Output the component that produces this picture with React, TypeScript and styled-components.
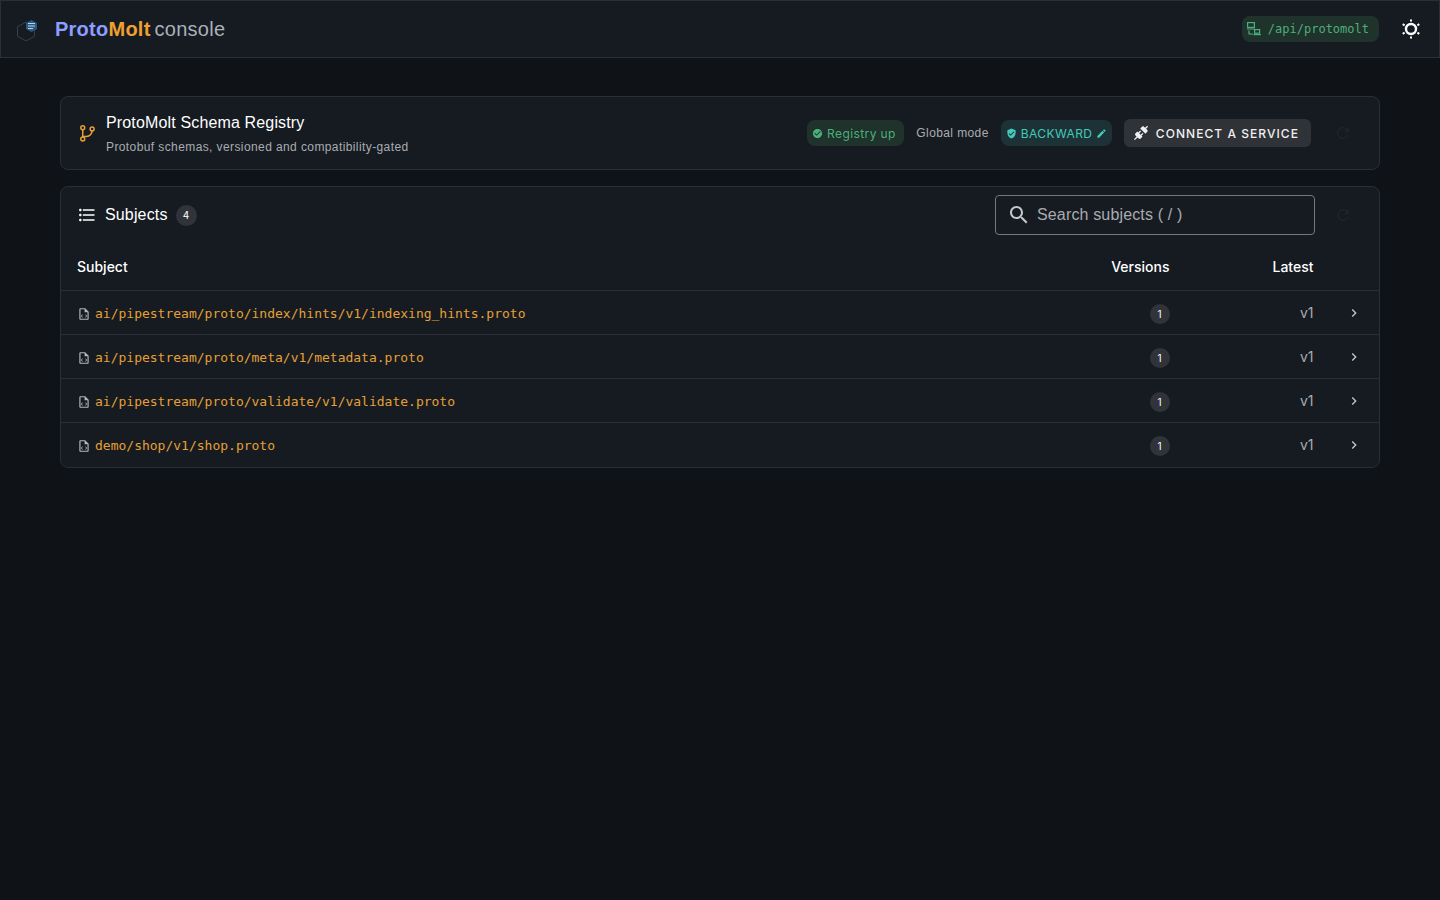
import React from 'react'
import styled, { createGlobalStyle } from 'styled-components'

const GlobalStyle = createGlobalStyle`
    html, body {
        margin: 0;
        padding: 0;
        background: #0f1216;
        color: #fff;
        font-family: Inter, "Liberation Sans", sans-serif;
    }
`

const subjects = [
    'ai/pipestream/proto/index/hints/v1/indexing_hints.proto',
    'ai/pipestream/proto/meta/v1/metadata.proto',
    'ai/pipestream/proto/validate/v1/validate.proto',
    'demo/shop/v1/shop.proto',
]

const paths = {
    list: 'M4 10.5c-.83 0-1.5.67-1.5 1.5s.67 1.5 1.5 1.5 1.5-.67 1.5-1.5-.67-1.5-1.5-1.5zm0-6c-.83 0-1.5.67-1.5 1.5S3.17 7.5 4 7.5 5.5 6.83 5.5 6 4.83 4.5 4 4.5zm0 12c-.83 0-1.5.68-1.5 1.5s.68 1.5 1.5 1.5 1.5-.68 1.5-1.5-.67-1.5-1.5-1.5zM7 19h14v-2H7v2zm0-6h14v-2H7v2zm0-8v2h14V5H7z',
    search: 'M15.5 14h-.79l-.28-.27C15.41 12.59 16 11.11 16 9.5 16 5.91 13.09 3 9.5 3S3 5.91 3 9.5 5.91 16 9.5 16c1.61 0 3.09-.59 4.23-1.57l.27.28v.79l5 4.99L20.49 19l-4.99-5zm-6 0C7.01 14 5 11.99 5 9.5S7.01 5 9.5 5 14 7.01 14 9.5 11.99 14 9.5 14z',
    check: 'M12 2C6.48 2 2 6.48 2 12s4.48 10 10 10 10-4.48 10-10S17.52 2 12 2zm-2 15-5-5 1.41-1.41L10 14.17l7.59-7.59L19 8l-9 9z',
    shield: 'M12 1 3 5v6c0 5.55 3.84 10.74 9 12 5.16-1.26 9-6.45 9-12V5l-9-4zm-2 16-4-4 1.41-1.41L10 14.17l6.59-6.59L18 9l-8 8z',
    edit: 'M3 17.25V21h3.75L17.81 9.94l-3.75-3.75L3 17.25zM20.71 7.04c.39-.39.39-1.02 0-1.41l-2.34-2.34a.9959.9959 0 0 0-1.41 0l-1.83 1.83 3.75 3.75 1.83-1.83z',
    chevron: 'M10 6 8.59 7.41 13.17 12l-4.58 4.59L10 18l6-6z',
    refresh: 'M17.65 6.35C16.2 4.9 14.21 4 12 4c-4.42 0-7.99 3.58-7.99 8s3.57 8 7.99 8c3.73 0 6.84-2.55 7.73-6h-2.08c-.82 2.33-3.04 4-5.65 4-3.31 0-6-2.69-6-6s2.69-6 6-6c1.66 0 3.14.69 4.22 1.78L13 11h7V4l-2.35 2.35z',
    file: 'M14 2H6c-1.1 0-2 .9-2 2v16c0 1.1.9 2 2 2h12c1.1 0 2-.9 2-2V8l-6-6zm4 18H6V4h7v5h5v11z',
    plug: 'M21.4 7.5C22.2 8.3 22.2 9.6 21.4 10.3L18.6 13.1L10.8 5.3L13.6 2.5C14.4 1.7 15.7 1.7 16.4 2.5L18.2 4.3L21.2 1.3L22.6 2.7L19.6 5.7L21.4 7.5M15.6 13.3L14.2 11.9L11.4 14.7L9.3 12.6L12.1 9.8L10.7 8.4L7.9 11.2L6.4 9.8L3.6 12.6C2.8 13.4 2.8 14.7 3.6 15.4L5.4 17.2L1.4 21.2L2.8 22.6L6.8 18.6L8.6 20.4C9.4 21.2 10.7 21.2 11.4 20.4L14.2 17.6L12.8 16.2L15.6 13.3Z',
}

const Icon = ({ d, size, color }: { d: string; size: number; color: string }) => (
    <svg width={size} height={size} viewBox="0 0 24 24" fill={color}>
        <path d={d} />
    </svg>
)

const App = () => {
    return (
        <>
            <GlobalStyle />
            <TopBar>
                <Brand>
                    <svg width="24" height="24" viewBox="0 0 24 24" fill="none">
                        <path d="M11 5 19.5 9.7V19.3L11 24 2.5 19.3V9.7Z" stroke="#3a4049" strokeWidth="1" />
                        <path d="M16.5 3 22 6V12L16.5 15 11 12V6Z" fill="#2a5a80" />
                        <path d="M13 6.5h7M13 9h7M13 11.5h5" stroke="#b9d3e6" strokeWidth="1.2" />
                    </svg>
                    <BrandName>
                        <BrandPart $color="#8c9eff">Proto</BrandPart>
                        <BrandPart $color="#f0a030">Molt</BrandPart>
                    </BrandName>
                    <BrandSuffix>console</BrandSuffix>
                </Brand>
                <TopActions>
                    <ApiChip>
                        <svg width="16" height="16" viewBox="0 0 16 16" fill="none" stroke="#4caf7a" strokeWidth="1.2">
                            <rect x="1.6" y="1.6" width="6.8" height="4.8" />
                            <path d="M1 8h8M3 9.5V13h4" />
                            <rect x="8.6" y="8.6" width="5" height="3.6" />
                            <path d="M7.5 13.6H15" />
                        </svg>
                        /api/protomolt
                    </ApiChip>
                    <svg width="24" height="24" viewBox="0 0 24 24" fill="none" stroke="#ffffff">
                        <circle cx="12" cy="12" r="5" strokeWidth="2.4" />
                        <path
                            d="M12 2.4v2.2M12 19.4v2.2M3.7 7.2l1.9 1.1M18.4 15.7l1.9 1.1M3.7 16.8l1.9-1.1M18.4 8.3l1.9-1.1"
                            strokeWidth="2"
                        />
                    </svg>
                </TopActions>
            </TopBar>

            <Page>
                <Card>
                    <HeaderRow>
                        <svg width="18" height="18" viewBox="0 0 24 24" fill="none" stroke="#e8a033" strokeWidth="2" strokeLinecap="round" strokeLinejoin="round">
                            <circle cx="5" cy="5" r="2.6" />
                            <circle cx="5" cy="20" r="2.6" />
                            <circle cx="17.5" cy="6.5" r="2.6" />
                            <path d="M5 7.6v9.8M17.5 9.1a7.5 7.5 0 0 1-7.5 7.5H5" />
                        </svg>
                        <TitleBlock>
                            <Title>ProtoMolt Schema Registry</Title>
                            <Subtitle>Protobuf schemas, versioned and compatibility-gated</Subtitle>
                        </TitleBlock>
                        <HeaderActions>
                            <Chip $bg="#1f322c" $color="#4caf7a" $paddingRight={8.5}>
                                <Icon d={paths.check} size={11} color="#4caf7a" />
                                Registry up
                            </Chip>
                            <ModeLabel>Global mode</ModeLabel>
                            <Chip $bg="#1c3236" $color="#45c9b8" $paddingRight={4.5}>
                                <Icon d={paths.shield} size={11} color="#45c9b8" />
                                BACKWARD
                                <Icon d={paths.edit} size={11} color="#45c9b8" />
                            </Chip>
                            <ConnectButton>
                                <Icon d={paths.plug} size={16} color="#f0f0f0" />
                                CONNECT A SERVICE
                            </ConnectButton>
                            <GhostIcon>
                                <Icon d={paths.refresh} size={18} color="#1e232a" />
                            </GhostIcon>
                        </HeaderActions>
                    </HeaderRow>
                </Card>

                <Card>
                    <ToolRow>
                        <Icon d={paths.list} size={20} color="#ffffff" />
                        <ToolTitle>Subjects</ToolTitle>
                        <CountBadge $size={21}>4</CountBadge>
                        <SearchBox>
                            <Icon d={paths.search} size={24} color="#c4c6c9" />
                            <SearchInput placeholder="Search subjects ( / )" />
                        </SearchBox>
                        <GhostIcon>
                            <Icon d={paths.refresh} size={18} color="#1e232a" />
                        </GhostIcon>
                    </ToolRow>
                    <HeadRow>
                        <span>Subject</span>
                        <RightCell>Versions</RightCell>
                        <RightCell>Latest</RightCell>
                    </HeadRow>
                    {subjects.map((subject) => (
                        <SubjectRow key={subject}>
                            <SubjectCell>
                                <FileGlyph width="14" height="14" viewBox="0 0 24 24" fill="#b4b7ba">
                                    <path d={paths.file} />
                                    <path d="M9.5 13 7.5 15.5 9.5 18M14.5 13 16.5 15.5 14.5 18" fill="none" stroke="#b4b7ba" strokeWidth="1.6" />
                                </FileGlyph>
                                <SubjectName>{subject}</SubjectName>
                            </SubjectCell>
                            <VersionCell>
                                <CountBadge $size={20}>1</CountBadge>
                            </VersionCell>
                            <LatestCell>v1</LatestCell>
                            <ChevronCell>
                                <Icon d={paths.chevron} size={16} color="#c4c6c9" />
                            </ChevronCell>
                        </SubjectRow>
                    ))}
                </Card>
            </Page>
        </>
    )
}

export default App

const TopBar = styled.header`
    height: 58px;
    box-sizing: border-box;
    background: #161b22;
    border: 1px solid #2a2f36;
    display: flex;
    align-items: center;
    justify-content: space-between;
    padding: 0 16px 0 14px;
`

const Brand = styled.div`
    display: flex;
    align-items: center;
    font-family: "Liberation Sans", sans-serif;
    font-size: 20px;
    line-height: 1;
    letter-spacing: 0.25px;
`

const BrandName = styled.span`
    font-weight: 700;
    margin-left: 16px;
`

const BrandPart = styled.span<{ $color: string }>`
    color: ${(p) => p.$color};
`

const BrandSuffix = styled.span`
    color: #a9b1ba;
    margin-left: 4px;
`

const TopActions = styled.div`
    display: flex;
    align-items: center;
    gap: 20px;
`

const ApiChip = styled.div`
    height: 26px;
    display: flex;
    align-items: center;
    gap: 6px;
    padding: 0 10px 0 3.5px;
    background: #1f322c;
    border-radius: 8px;
    color: #4caf7a;
    font-family: "DejaVu Sans Mono", monospace;
    font-size: 12px;
`

const Page = styled.main`
    padding: 38px 60px 0;
    display: flex;
    flex-direction: column;
    gap: 16px;
`

const Card = styled.section`
    background: #161b22;
    border: 1px solid #2a2f36;
    border-radius: 8px;
    overflow: hidden;
`

const HeaderRow = styled.div`
    height: 72px;
    display: flex;
    align-items: center;
    padding: 0 16px 0 18px;
    gap: 9px;
`

const TitleBlock = styled.div`
    display: flex;
    flex-direction: column;
    gap: 6px;
    padding-top: 1px;
    font-family: "Liberation Sans", sans-serif;
`

const Title = styled.div`
    font-size: 16px;
    line-height: 20px;
    letter-spacing: 0.15px;
    color: #fff;
`

const Subtitle = styled.div`
    font-size: 12px;
    line-height: 16px;
    letter-spacing: 0.4px;
    color: #a9acb0;
`

const HeaderActions = styled.div`
    margin-left: auto;
    display: flex;
    align-items: center;
    gap: 12px;
`

const Chip = styled.div<{ $bg: string; $color: string; $paddingRight: number }>`
    height: 26px;
    display: flex;
    align-items: center;
    gap: 4px;
    padding: 0 ${(p) => p.$paddingRight}px 0 5px;
    border-radius: 8px;
    background: ${(p) => p.$bg};
    color: ${(p) => p.$color};
    font-size: 12px;
    letter-spacing: 0.4px;
`

const ModeLabel = styled.span`
    font-family: "Liberation Sans", sans-serif;
    font-size: 12px;
    letter-spacing: 0.4px;
    color: #a9acb0;
`

const ConnectButton = styled.button`
    height: 28px;
    display: flex;
    align-items: center;
    gap: 7px;
    padding: 0 12px 0 9px;
    border: none;
    border-radius: 6px;
    background: #2f3338;
    color: #f0f0f0;
    font-family: inherit;
    font-size: 12px;
    font-weight: 500;
    letter-spacing: 1.05px;
`

const GhostIcon = styled.span`
    width: 40px;
    display: flex;
    justify-content: center;
`

const ToolRow = styled.div`
    height: 56px;
    display: flex;
    align-items: center;
    padding: 0 16px;
    gap: 8px;
`

const ToolTitle = styled.span`
    font-family: "Liberation Sans", sans-serif;
    font-size: 16px;
    letter-spacing: 0.15px;
`

const CountBadge = styled.span<{ $size: number }>`
    width: ${(p) => p.$size}px;
    height: ${(p) => p.$size}px;
    display: inline-flex;
    align-items: center;
    justify-content: center;
    border-radius: 50%;
    background: #30343a;
    color: #fff;
    font-size: 10px;
`

const SearchBox = styled.label`
    margin-left: auto;
    width: 320px;
    height: 40px;
    box-sizing: border-box;
    display: flex;
    align-items: center;
    gap: 6px;
    padding: 0 11px;
    border: 1px solid #75787c;
    border-radius: 4px;
`

const SearchInput = styled.input`
    flex: 1;
    min-width: 0;
    padding: 0;
    border: none;
    outline: none;
    background: transparent;
    color: #fff;
    font-family: "Liberation Sans", sans-serif;
    font-size: 16px;
    letter-spacing: 0.15px;

    &::placeholder {
        color: #a9acb0;
        opacity: 1;
    }
`

const HeadRow = styled.div`
    height: 47px;
    display: grid;
    grid-template-columns: 1fr 90px 144px 65.5px;
    align-items: center;
    padding: 0 0 0 16px;
    font-size: 14px;
    font-weight: 500;
    border-bottom: 1px solid #2a2f36;
`

const SubjectRow = styled.div`
    height: 44px;
    box-sizing: border-box;
    display: grid;
    grid-template-columns: 1fr 90px 144px 65.5px;
    align-items: center;
    padding: 1px 0 0 16px;
    border-bottom: 1px solid #2a2f36;

    &:last-child {
        padding-top: 0;
        border-bottom: none;
    }
`

const SubjectCell = styled.div`
    display: flex;
    align-items: center;
    gap: 4px;
`

const FileGlyph = styled.svg`
    flex: none;
    margin-top: 2px;
`

const SubjectName = styled.span`
    font-family: "DejaVu Sans Mono", monospace;
    font-size: 13px;
    color: #e5a035;
`

const RightCell = styled.div`
    display: flex;
    justify-content: flex-end;
    text-align: right;
`

const VersionCell = styled(RightCell)`
    margin-top: 2px;
`

const LatestCell = styled(RightCell)`
    margin-bottom: 2px;
    font-size: 14px;
    color: #a9acb0;
`

const ChevronCell = styled.div`
    display: flex;
    justify-content: flex-end;
    padding-right: 17px;
`
